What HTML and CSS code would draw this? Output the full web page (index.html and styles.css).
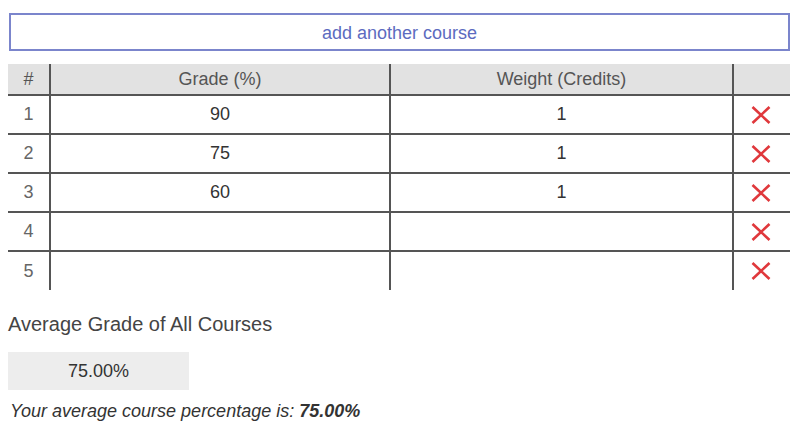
FILE: index.html
```html
<!DOCTYPE html>
<html lang="en">
<head>
<meta charset="utf-8">
<title>Average Grade Calculator</title>
<link rel="stylesheet" href="styles.css">
</head>
<body>
<div class="page">
  <button class="add-btn" type="button">add another course</button>

  <div class="grid" role="table">
    <div class="cell head idx">#</div>
    <div class="cell head">Grade (%)</div>
    <div class="cell head">Weight (Credits)</div>
    <div class="cell head"></div>

    <div class="cell idx">1</div>
    <div class="cell val">90</div>
    <div class="cell val">1</div>
    <div class="cell del"><svg class="x" viewBox="0 0 20 18"><path d="M1.5 1 L18.5 17 M18.5 1 L1.5 17"/></svg></div>

    <div class="cell idx">2</div>
    <div class="cell val">75</div>
    <div class="cell val">1</div>
    <div class="cell del"><svg class="x" viewBox="0 0 20 18"><path d="M1.5 1 L18.5 17 M18.5 1 L1.5 17"/></svg></div>

    <div class="cell idx">3</div>
    <div class="cell val">60</div>
    <div class="cell val">1</div>
    <div class="cell del"><svg class="x" viewBox="0 0 20 18"><path d="M1.5 1 L18.5 17 M18.5 1 L1.5 17"/></svg></div>

    <div class="cell idx">4</div>
    <div class="cell val"></div>
    <div class="cell val"></div>
    <div class="cell del"><svg class="x" viewBox="0 0 20 18"><path d="M1.5 1 L18.5 17 M18.5 1 L1.5 17"/></svg></div>

    <div class="cell idx last">5</div>
    <div class="cell val last"></div>
    <div class="cell val last"></div>
    <div class="cell del last"><svg class="x" viewBox="0 0 20 18"><path d="M1.5 1 L18.5 17 M18.5 1 L1.5 17"/></svg></div>
  </div>

  <h2 class="avg-title">Average Grade of All Courses</h2>
  <div class="avg-box">75.00%</div>
  <p class="avg-text">Your average course percentage is: <b>75.00%</b></p>
</div>
</body>
</html>
```

FILE: styles.css
```css
* { box-sizing: border-box; }

html, body {
  margin: 0;
  padding: 0;
  background: #ffffff;
}

body {
  font-family: "Liberation Sans", Arial, sans-serif;
  font-size: 18px;
  color: #333333;
}

.page {
  padding: 13px 13px 0 8px;
  display: flex;
  flex-direction: column;
  align-items: flex-start;
}

.add-btn {
  height: 38px;
  margin-left: 1px;
  width: 781px;
  border: 2px solid #7b85cc;
  background: #ffffff;
  color: #5c6bc0;
  font-family: inherit;
  font-size: 18px;
  padding: 2px 0 0 0;
  cursor: pointer;
}

.grid {
  margin-top: 13px;
  width: 782px;
  display: grid;
  grid-template-columns: 41px 340px 343px 58px;
}

.cell {
  display: flex;
  align-items: center;
  justify-content: center;
  height: 39px;
  border-bottom: 2px solid #555555;
  border-left: 2px solid #555555;
  color: #333333;
}

.cell.last { border-bottom: none; height: 38px; }

.cell.idx { border-left: none; color: #666666; }

.cell.head {
  height: 32px;
  background: #e2e2e2;
  color: #555555;
}

.x {
  width: 20px;
  height: 18px;
  margin-left: -2px;
}

.x path {
  stroke: #e0383c;
  stroke-width: 2.6;
  fill: none;
}

.avg-title {
  margin: 23px 0 0 0;
  font-size: 20px;
  font-weight: normal;
  line-height: 23px;
  color: #444444;
}

.avg-box {
  margin-top: 16px;
  width: 181px;
  height: 38px;
  background: #ededed;
  display: flex;
  align-items: center;
  justify-content: center;
  color: #333333;
}

.avg-text {
  margin: 10px 0 0 2px;
  font-style: italic;
  line-height: 22px;
  color: #333333;
}

.avg-text b { font-weight: bold; }
```
